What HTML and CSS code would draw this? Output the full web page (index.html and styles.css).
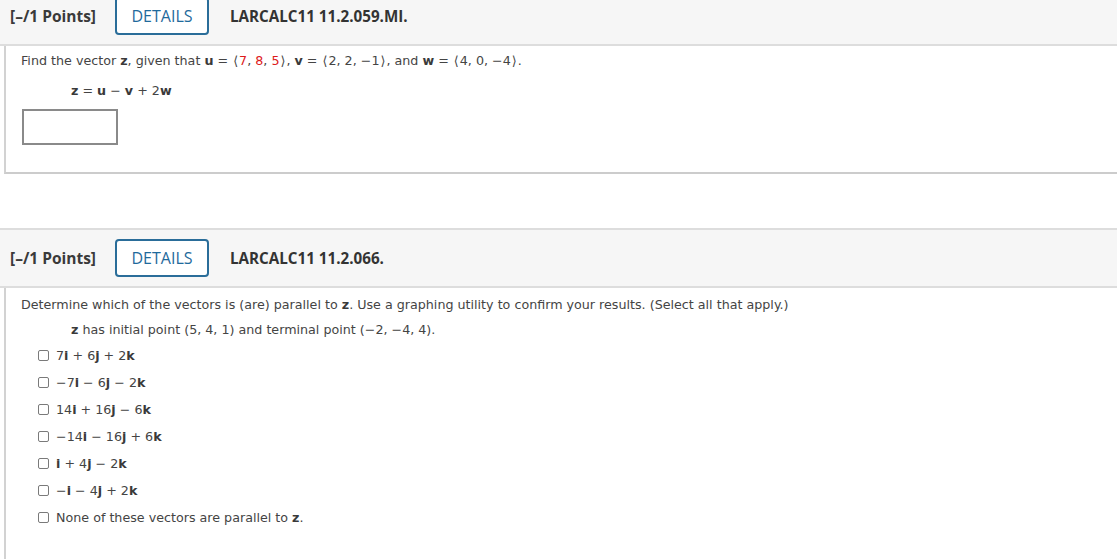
FILE: index.html
```html
<!DOCTYPE html>
<html lang="en">
<head>
<meta charset="utf-8">
<title>Questions</title>
<link rel="stylesheet" href="styles.css">
</head>
<body>
<main class="page">
  <section class="question q1">
    <header class="qhead">
      <span class="pts">[–/1 Points]</span>
      <button class="details">DETAILS</button>
      <span class="qid">LARCALC11 11.2.059.MI.</span>
    </header>
    <div class="qbody">
      <p class="prompt">Find the vector <b>z</b>, given that <b>u</b> = <span class="ang">⟨</span><span class="red">7</span>, <span class="red">8</span>, <span class="red">5</span><span class="ang">⟩</span>, <b>v</b> = <span class="ang">⟨</span>2, 2, −1<span class="ang">⟩</span>, and <b>w</b> = <span class="ang">⟨</span>4, 0, −4<span class="ang">⟩</span>.</p>
      <p class="indent formula"><b>z</b> = <b>u</b> − <b>v</b> + 2<b>w</b></p>
      <div class="answer"></div>
    </div>
  </section>

  <section class="question q2">
    <header class="qhead">
      <span class="pts">[–/1 Points]</span>
      <button class="details">DETAILS</button>
      <span class="qid">LARCALC11 11.2.066.</span>
    </header>
    <div class="qbody">
      <p class="prompt">Determine which of the vectors is (are) parallel to <b>z</b>. Use a graphing utility to confirm your results. (Select all that apply.)</p>
      <p class="indent">
        <b>z</b> has initial point (5, 4, 1) and terminal point (−2, −4, 4).</p>
      <ul class="choices">
        <li><span class="box"></span><span>7<b>i</b> + 6<b>j</b> + 2<b>k</b></span></li>
        <li><span class="box"></span><span>−7<b>i</b> − 6<b>j</b> − 2<b>k</b></span></li>
        <li><span class="box"></span><span>14<b>i</b> + 16<b>j</b> − 6<b>k</b></span></li>
        <li><span class="box"></span><span>−14<b>i</b> − 16<b>j</b> + 6<b>k</b></span></li>
        <li><span class="box"></span><span><b>i</b> + 4<b>j</b> − 2<b>k</b></span></li>
        <li><span class="box"></span><span>−<b>i</b> − 4<b>j</b> + 2<b>k</b></span></li>
        <li><span class="box"></span><span>None of these vectors are parallel to <b>z</b>.</span></li>
      </ul>
    </div>
  </section>
</main>
</body>
</html>
```

FILE: styles.css
```css
html, body {
  margin: 0;
  padding: 0;
  background: #ffffff;
  overflow: hidden;
}

.page {
  display: flex;
  flex-direction: column;
  margin-top: -14px;
}

.qhead {
  display: flex;
  align-items: center;
  height: 56px;
  background: #f6f6f6;
  border-top: 2px solid #dddddd;
  border-bottom: 2px solid #dddddd;
  padding-left: 10px;
  font-family: "Open Sans", "DejaVu Sans", sans-serif;
  font-size: 15.2px;
  color: #3a3a3a;
}

.pts {
  font-weight: 700;
  font-size: 15.5px;
  width: 105px;
}

.details {
  font-family: "Open Sans", "DejaVu Sans", sans-serif;
  font-size: 16px;
  font-weight: 400;
  color: #1f6a9c;
  background: #ffffff;
  border: 2px solid #2a6d99;
  border-radius: 4px;
  width: 94px;
  height: 38px;
  padding: 0;
  margin-right: 21px;
}

.qid {
  font-weight: 700;
  color: #333333;
}

.qbody {
  margin-left: 4px;
  border-left: 2px solid #d2d2d2;
  padding-left: 15px;
  font-family: "DejaVu Sans", Verdana, sans-serif;
  font-size: 12.7px;
  color: #444444;
}

.q1 .qbody {
  border-bottom: 2px solid #cccccc;
  height: 126px;
}

.q2 {
  margin-top: 54px;
}

.q2 .qbody {
  height: 300px;
}

.prompt {
  margin: 0;
  line-height: 16px;
}

.q1 .prompt {
  padding-top: 7px;
}

.q2 .prompt {
  padding-top: 9px;
}

.indent {
  margin: 0;
  padding-left: 50px;
  line-height: 16px;
}

.q1 .formula {
  padding-top: 14px;
}

.q1 .answer {
  margin-top: 10px;
}

.q2 .indent {
  padding-top: 9px;
}

b {
  font-weight: 700;
  color: #3a3a3a;
}

.red {
  color: #dd1a1a;
}

.ang {
  padding: 0 1px;
}

.answer {
  margin-left: 1px;
  width: 92px;
  height: 32px;
  border: 2px solid #8a8a8a;
  background: #ffffff;
}

.choices {
  list-style: none;
  margin: 0;
  padding: 4px 0 0 17px;
  display: flex;
  flex-direction: column;
}

.choices li {
  display: flex;
  align-items: center;
  height: 27px;
  gap: 7px;
}

.box {
  width: 9px;
  height: 9px;
  border: 1px solid #7a7a7a;
  border-radius: 2px;
  background: #ffffff;
  flex: none;
}
```
